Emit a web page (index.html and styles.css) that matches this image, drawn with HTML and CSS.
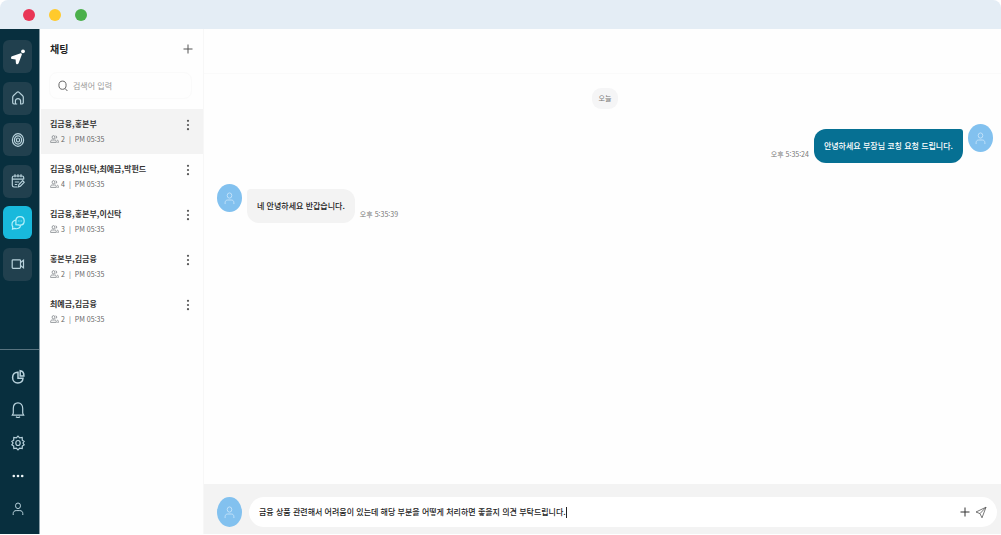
FILE: index.html
```html
<!DOCTYPE html>
<html lang="ko">
<head>
<meta charset="utf-8">
<title>채팅</title>
<link rel="stylesheet" href="styles.css">
</head>
<body>
<svg class="symbols" aria-hidden="true">
  <symbol id="person" viewBox="0 0 12 14" preserveAspectRatio="none"><ellipse cx="6" cy="3.8" rx="2.5" ry="2.8"/><path d="M1.2 13v-1.4c0-2 1.2-3 3-3h3.6c1.8 0 3 1 3 3V13"/></symbol>
  <symbol id="people" viewBox="0 0 9 8"><ellipse cx="3.5" cy="2.2" rx="1.4" ry="1.6"/><path d="M.6 7.4V6.6c0-1 .6-1.6 1.6-1.6h2.5c1 0 1.6.6 1.6 1.6v.8zM5.6.8c1.5.1 1.5 2.5 0 2.8M7 5c1 .2 1.4.8 1.4 2.4h-1"/></symbol>
  <symbol id="dots" viewBox="0 0 4 12"><circle cx="2" cy="1.8" r="1.1"/><circle cx="2" cy="6" r="1.1"/><circle cx="2" cy="10.2" r="1.1"/></symbol>
  <symbol id="plus" viewBox="0 0 10 10"><path d="M5 .5v9M.5 5h9"/></symbol>
</svg>
<div class="window">
  <header class="titlebar"><span class="light red"></span><span class="light yellow"></span><span class="light green"></span></header>
  <div class="app">
    <nav class="sidebar" aria-label="메뉴">
      <div class="nav-main">
        <button class="nav-button" aria-label="시작"><svg class="nav-icon logo" viewBox="0 0 14 16"><path d="M1 7.2 9 4.4c1.5-.5 2.2.3 1.7 1.7L7.6 14.2c-.6 1.6-2.5 1.4-2.7-.2L4.6 10.6 1.3 10.1C-.3 9.8-.4 7.8 1 7.2Z"/><circle cx="12" cy="2.3" r="1.9"/></svg></button>
        <button class="nav-button" aria-label="홈"><svg class="nav-icon" viewBox="0 0 14 16"><path d="M4.4 14H3c-.9 0-1.3-.5-1.3-1.4V7.2c0-.6.2-1 .6-1.4l3.6-3.4c.8-.7 1.4-.7 2.2 0l3.6 3.4c.4.4.6.8.6 1.4v5.4c0 .9-.4 1.4-1.3 1.4H9.6v-3.2c0-3-5.2-3-5.2 0V14h1.8"/></svg></button>
        <button class="nav-button" aria-label="목표"><svg class="nav-icon" viewBox="0 0 14 16"><ellipse cx="7" cy="8" rx="5.6" ry="6.3"/><ellipse cx="7" cy="8" rx="3.6" ry="4.2"/><ellipse cx="7" cy="8" rx="1.6" ry="2"/></svg></button>
        <button class="nav-button" aria-label="일정"><svg class="nav-icon" viewBox="0 0 14 16"><path d="M6.3 14H3c-1.1 0-1.7-.6-1.7-1.7V4.6C1.3 3.5 1.9 3 3 3h8c1.1 0 1.7.5 1.7 1.6v1.9M1.3 6.2h11.4M4 1.2v3M7 1.2v3M10 1.2v3M3.8 9h4.4M3.8 11.5h2.4M7.4 13.8l.5-2.2 3.8-3.9 1.5 1.6-3.8 3.9z"/></svg></button>
        <button class="nav-button active" aria-label="채팅" aria-current="page"><svg class="nav-icon" viewBox="0 0 14 16"><path d="M4.9 9.6V6C4.9 3.2 6.4 1.6 9 1.6s4.2 1.7 4.2 4.3S11.6 10.2 9 10.2c-.6 0-1.1-.1-1.6-.3zM4.6 5.2C2.2 5.7 1 7.4 1 9.5c0 1 .3 1.7.8 2.4l-.3 2.2 2-.7c3 1 5.6-.2 6.2-3M6.9 6h.8m.9 0h.8m.9 0h.8"/></svg></button>
        <button class="nav-button" aria-label="화상 회의"><svg class="nav-icon" viewBox="0 0 14 16"><rect x="1.2" y="3.8" width="8.3" height="8.5" rx=".8"/><path d="m9.5 6.5 3-2.3v7.7l-3-2.3"/></svg></button>
      </div>
      <div class="nav-tools">
        <button class="tool" aria-label="통계"><svg class="nav-icon bold" viewBox="0 0 14 16"><path d="M7 3.2C3.7 3 1.6 5.3 1.6 8.5S3.8 14 6.8 14c2.8 0 5-1.9 5.2-4.7H7z"/><path d="M9.2 1.7v5.2h3.7C13 4 11.8 2 9.2 1.7Z"/></svg></button>
        <button class="tool" aria-label="알림"><svg class="nav-icon" viewBox="0 0 14 16"><path d="M2.3 11.2V6.4C2.3 3.2 4.2.9 7 .9s4.7 2.3 4.7 5.5v4.8l1 2H1.3zM5 14.8c1 .9 3 .9 4 0"/></svg></button>
        <button class="tool" aria-label="설정"><svg class="nav-icon" viewBox="0 0 14 16"><path d="m7 1.2 1.7 1.7 2.5-.4.1 2.7 1.9 1.2L12 8l1.2 1.8-1.9 1.2-.1 2.6-2.5-.4L7 14.9l-1.7-1.7-2.5.4L2.7 11 .8 9.8 2 8 .8 6.4l1.9-1.2.1-2.7 2.5.4z"/><ellipse cx="7" cy="8" rx="2.2" ry="2.5"/></svg></button>
        <button class="tool" aria-label="더 보기"><svg class="nav-icon solid" viewBox="0 0 14 16"><circle cx="2.8" cy="8" r="1.3"/><circle cx="7" cy="8" r="1.3"/><circle cx="11.2" cy="8" r="1.3"/></svg></button>
        <button class="tool" aria-label="내 정보"><svg class="profile"><use href="#person"/></svg></button>
      </div>
    </nav>
    <aside class="rooms">
      <div class="rooms-head"><h1 class="title">채팅</h1><button class="icon-button" aria-label="새 채팅"><svg class="plus"><use href="#plus"/></svg></button></div>
      <label class="search"><svg class="search-icon" viewBox="0 0 10 12"><ellipse cx="4.5" cy="5.2" rx="3.6" ry="4.1"/><path d="m7 8.4 2.4 2.6"/></svg><input class="search-input" type="search" placeholder="검색어 입력" aria-label="검색어 입력"></label>
      <ul class="room-list">
        <li class="room selected"><div class="room-text"><h2 class="room-name">김금융,홍본부</h2><p class="meta"><svg class="people"><use href="#people"/></svg><span>2</span><span class="bar">|</span><time>PM 05:35</time></p></div><button class="icon-button" aria-label="채팅방 메뉴"><svg class="dots"><use href="#dots"/></svg></button></li>
        <li class="room"><div class="room-text"><h2 class="room-name">김금융,이신탁,최예금,박펀드</h2><p class="meta"><svg class="people"><use href="#people"/></svg><span>4</span><span class="bar">|</span><time>PM 05:35</time></p></div><button class="icon-button" aria-label="채팅방 메뉴"><svg class="dots"><use href="#dots"/></svg></button></li>
        <li class="room"><div class="room-text"><h2 class="room-name">김금융,홍본부,이신탁</h2><p class="meta"><svg class="people"><use href="#people"/></svg><span>3</span><span class="bar">|</span><time>PM 05:35</time></p></div><button class="icon-button" aria-label="채팅방 메뉴"><svg class="dots"><use href="#dots"/></svg></button></li>
        <li class="room"><div class="room-text"><h2 class="room-name">홍본부,김금융</h2><p class="meta"><svg class="people"><use href="#people"/></svg><span>2</span><span class="bar">|</span><time>PM 05:35</time></p></div><button class="icon-button" aria-label="채팅방 메뉴"><svg class="dots"><use href="#dots"/></svg></button></li>
        <li class="room"><div class="room-text"><h2 class="room-name">최예금,김금융</h2><p class="meta"><svg class="people"><use href="#people"/></svg><span>2</span><span class="bar">|</span><time>PM 05:35</time></p></div><button class="icon-button" aria-label="채팅방 메뉴"><svg class="dots"><use href="#dots"/></svg></button></li>
      </ul>
    </aside>
    <main class="chat">
      <div class="chat-head"></div>
      <div class="messages">
        <span class="day">오늘</span>
        <div class="message mine"><span class="avatar"><svg class="face"><use href="#person"/></svg></span><p class="bubble">안녕하세요 부장님 코칭 요청 드립니다.</p><time class="time">오후 5:35:24</time></div>
        <div class="message"><span class="avatar"><svg class="face"><use href="#person"/></svg></span><p class="bubble">네 안녕하세요 반갑습니다.</p><time class="time">오후 5:35:39</time></div>
      </div>
      <form class="composer">
        <span class="avatar large"><svg class="face"><use href="#person"/></svg></span>
        <div class="field">
          <div class="entry"><input class="field-input" type="text" aria-label="메시지" value="금융 상품 관련해서 어려움이 있는데 해당 부분을 어떻게 처리하면 좋을지 의견 부탁드립니다."><span class="caret"></span></div>
          <button class="icon-button" type="button" aria-label="첨부"><svg class="plus dark"><use href="#plus"/></svg></button>
          <button class="icon-button" type="button" aria-label="보내기"><svg class="send" viewBox="0 0 12 13"><path d="M1 6 11 1.2 7 11.8 5 7.6zM5 7.6l6-6.4"/></svg></button>
        </div>
      </form>
    </main>
  </div>
</div>
</body>
</html>
```
FILE: styles.css
```css
* { box-sizing: border-box; }
body { margin: 0; background: #fff; color: #333; font: 8px/12px "Noto Sans CJK KR", "Noto Sans", sans-serif; }
button, input { font: inherit; color: inherit; border: 0; padding: 0; background: none; outline: none; }
h1, h2, p, ul { margin: 0; padding: 0; }
svg { display: block; fill: none; stroke: currentColor; }
.symbols { position: absolute; width: 0; height: 0; }
.window { display: flex; flex-direction: column; height: 100vh; padding-bottom: 1px; }
.titlebar { display: flex; align-items: center; gap: 14px; height: 29px; flex: none; padding: 1px 23px 0; background: #e4edf5; border-radius: 8px 8px 0 0; }
.light { width: 12px; height: 12px; border-radius: 50%; }
.red { background: #e93656; }
.yellow { background: #ffca2c; }
.green { background: #4bb04b; }
.app { display: flex; flex: 1; min-height: 0; }

.sidebar { display: flex; flex-direction: column; justify-content: space-between; width: 40px; flex: none; background: #082f3e; border-right: 1px solid #8b9fa8; color: #b8d2dc; }
.nav-main { display: flex; flex-direction: column; justify-content: space-between; height: 252px; padding: 11px 0 0 3px; }
.nav-button { display: grid; place-items: center; width: 29px; height: 33px; border-radius: 6px; background: #21404e; }
.nav-button.active { background: #18b9dc; color: #b4f0fa; }
.nav-icon { width: 14px; height: 16px; stroke-width: 1.2; }
.nav-icon.logo { fill: #fff; stroke: none; }
.nav-icon.solid { fill: #eef6f8; stroke: none; }
.nav-icon.bold { stroke-width: 1.5; }
.nav-tools { display: flex; flex-direction: column; padding: 10px 0 9px; border-top: 1px solid #58737f; }
.tool { display: grid; place-items: center; width: 35px; height: 33px; }
.profile { width: 12px; height: 14px; }

.rooms { width: 164px; flex: none; padding-left: 1px; background: #fefefe; border-right: 1px solid #f7f7f7; }
.rooms-head { display: flex; align-items: center; justify-content: space-between; height: 40px; padding: 0 9px; }
.title { font-size: 10px; line-height: 14px; font-weight: 700; color: #222; }
.icon-button { display: grid; place-items: center; width: 12px; height: 14px; flex: none; color: #555; }
.plus { width: 10px; height: 10px; }
.plus.dark { color: #333; }
.search { display: flex; align-items: center; gap: 5px; height: 27px; margin: 3px 11px 10px 8px; padding: 0 8px; border: 1px solid #fafafa; border-radius: 8px; }
.search-icon { width: 10px; height: 12px; flex: none; color: #666; }
.search-input { min-width: 0; flex: 1; }
.search-input::placeholder { color: #999; opacity: 1; }
.room-list { list-style: none; }
.room { display: flex; justify-content: space-between; height: 45px; padding: 9px 9px 0; }
.room.selected { background: #f3f3f3; }
.room-name { font-size: 8px; line-height: 12px; font-weight: 700; color: #333; }
.meta { display: flex; align-items: center; margin-top: 4px; font-size: 7px; line-height: 10px; color: #666; }
.people { width: 9px; height: 8px; margin-right: 2px; stroke-width: .8; color: #7c8187; }
.bar { margin: 0 4px; }
.dots { width: 4px; height: 12px; fill: #555; stroke: none; }

.chat { display: flex; flex-direction: column; flex: 1; min-width: 0; background: #fefefe; }
.chat-head { height: 45px; border-bottom: 1px solid #fafafa; }
.messages { display: flex; flex-direction: column; flex: 1; padding: 14px 8px 0 13px; }
.day { align-self: center; padding: 5px 7px; border-radius: 9px; background: #f5f5f6; font-size: 7px; line-height: 11px; color: #777; }
.message { display: flex; align-items: flex-start; gap: 5px; margin-top: 21px; }
.message.mine { flex-direction: row-reverse; margin-top: 15px; }
.avatar { display: grid; place-items: center; flex: none; width: 25px; height: 28px; border-radius: 50%; background: #82c1ef; color: #c4e3fa; }
.avatar.large { height: 30px; }
.face { width: 11px; height: 13px; }
.bubble { margin-top: 5px; padding: 11px 10px; border-radius: 4px 12px 12px 12px; background: #f3f3f3; color: #222; font-weight: 500; }
.mine .bubble { border-radius: 12px 3px 12px 12px; background: #067093; color: #fff; }
.time { margin-top: 24px; font-size: 7px; line-height: 12px; color: #777; }
.composer { display: flex; align-items: center; gap: 7px; padding: 13px 4px 7px 13px; background: #f3f3f3; }
.field { display: flex; align-items: center; gap: 4px; flex: 1; height: 30px; padding: 0 10px; border-radius: 15px; background: #fff; }
.entry { display: flex; align-items: center; flex: 1; min-width: 0; }
.field-input { field-sizing: content; min-width: 0; color: #222; font-weight: 500; }
.caret { width: 1px; height: 11px; background: #222; }
.send { width: 12px; height: 13px; stroke-width: .8; }
```
